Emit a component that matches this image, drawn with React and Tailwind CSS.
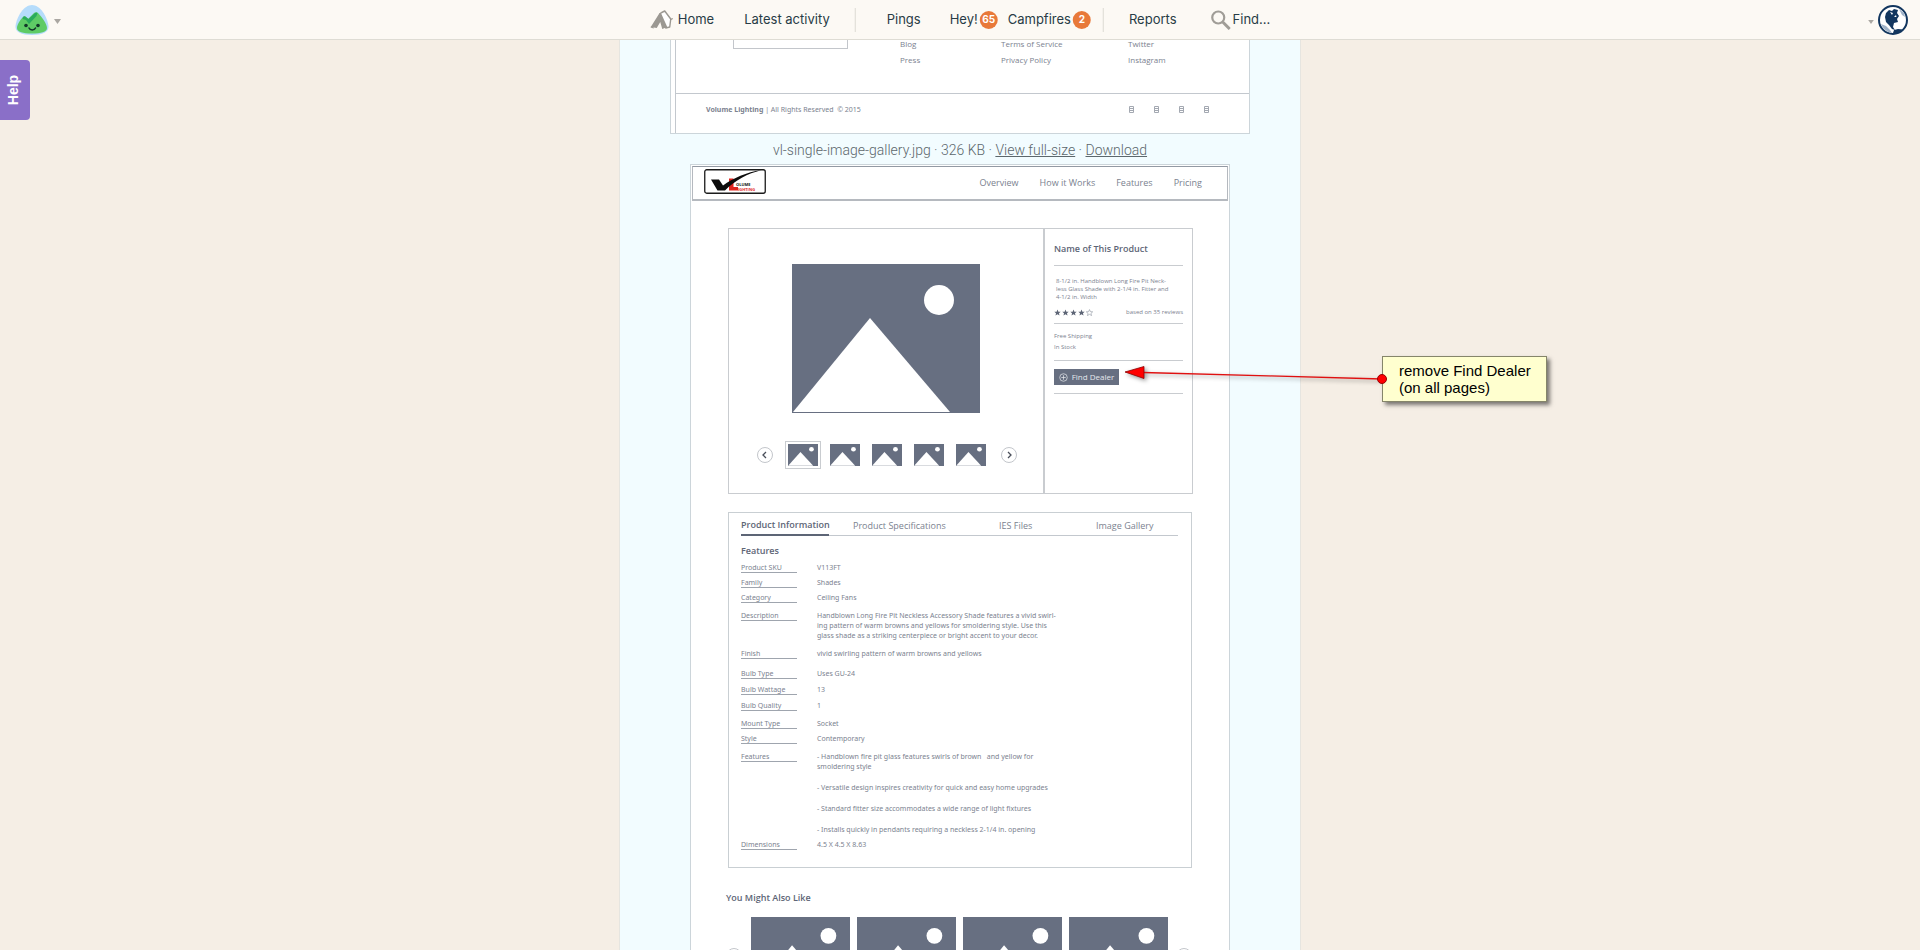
import React from "react";

const specs = [
  { label: "Product SKU", value: ["V113FT"], row: "h-[15px]" },
  { label: "Family", value: ["Shades"], row: "h-[15px]" },
  { label: "Category", value: ["Ceiling Fans"], row: "h-[18px]" },
  {
    label: "Description",
    value: [
      "Handblown Long Fire Pit Neckless Accessory Shade features a vivid swirl-\ning pattern of warm browns and yellows for smoldering style. Use this\nglass shade as a striking centerpiece or bright accent to your decor.",
    ],
    row: "h-[38px]",
  },
  { label: "Finish", value: ["vivid swirling pattern of warm browns and yellows"], row: "h-[20px]" },
  { label: "Bulb Type", value: ["Uses GU-24"], row: "h-[16px]" },
  { label: "Bulb Wattage", value: ["13"], row: "h-[16px]" },
  { label: "Bulb Quality", value: ["1"], row: "h-[18px]" },
  { label: "Mount Type", value: ["Socket"], row: "h-[15px]" },
  { label: "Style", value: ["Contemporary"], row: "h-[18px]" },
  {
    label: "Features",
    value: [
      "- Handblown fire pit glass features swirls of brown   and yellow for\nsmoldering style",
      "- Versatile design inspires creativity for quick and easy home upgrades",
      "- Standard fitter size accommodates a wide range of light fixtures",
      "- Installs quickly in pendants requiring a neckless 2-1/4 in. opening",
    ],
    row: "h-[88px]",
  },
  { label: "Dimensions", value: ["4.5 X 4.5 X 8.63"], row: "h-[15px]" },
];

const footerLinks = [
  ["Blog", "Press"],
  ["Terms of Service", "Privacy Policy"],
  ["Twitter", "Instagram"],
];

const Placeholder = ({ className }) => (
  <svg viewBox="0 0 188 149" preserveAspectRatio="none" className={className} aria-hidden="true">
    <rect width="188" height="149" fill="#676f81" />
    <circle cx="147" cy="36" r="15" fill="#fff" />
    <path d="M1 148L78 54l80 94z" fill="#fff" />
  </svg>
);

const Arrow = ({ label, flip }) => (
  <button
    type="button"
    aria-label={label}
    className="flex h-4 w-4 shrink-0 items-center justify-center rounded-full border border-[#c3c6cb] text-[#4a4f5a]"
  >
    <svg viewBox="0 0 8 8" className="h-2 w-2" fill="none" stroke="currentColor" strokeWidth="1.3" aria-hidden="true">
      <path d={flip ? "M3 1l3 3-3 3" : "M5 1L2 4l3 3"} />
    </svg>
  </button>
);

const Star = ({ filled }) => (
  <svg viewBox="0 0 24 24" className="h-[7px] w-[7px]" fill={filled ? "#5d6576" : "none"} stroke="#8a909c" strokeWidth={filled ? "0" : "2"} aria-hidden="true">
    <path d="M12 2l3 7 8 .7-6 5.200 2 7.600-7-4.200-7 4.200 2-7.600-6-5.200L9 9z" />
  </svg>
);

const Caret = ({ className }) => (
  <svg viewBox="0 0 7 5" className={className} aria-hidden="true">
    <path d="M0 0h7L3.500 5z" fill="#aaa7a2" />
  </svg>
);

const Badge = ({ children }) => (
  <span className="flex h-[18px] w-[18px] items-center justify-center rounded-full bg-[#e8793a] text-[10px] font-bold text-white">
    {children}
  </span>
);

const TopBar = () => (
  <header className="relative z-10 flex h-10 shrink-0 items-center justify-between border-b border-[#dedcd4] bg-[#fcf9f4] pl-3.5 pr-3">
    <button type="button" aria-label="Basecamp menu" className="flex items-center gap-1">
      <svg viewBox="0 0 36 32" className="h-8 w-9" aria-hidden="true">
        <path d="M18 1C10 1 3 12 1.500 22c-.6 6 6 9 16.500 9s17-3 16.500-9C33 12 26 1 18 1z" fill="#b5dcfb" />
        <path d="M3 24c0-3 3-8 6-11 1-1 2-1 3 0l2 2 6-6c1-1 3-1 4 0 4 4 9 11 9 15 0 4-6 5.500-15 5.500S3 28 3 24z" fill="#5ecb65" />
        <path d="M9 13c1-1 2-1 3 0l2.500 2L21 9c1-.8 2-.8 2.500 0l-1 3-7.500 8-3-4-3.500-1z" fill="#2bab5c" />
        <circle cx="12" cy="21.500" r="1.800" fill="#12372a" />
        <circle cx="24" cy="21.500" r="1.800" fill="#12372a" />
        <path d="M15 24c1 2.600 5.500 2.600 6.500 0" fill="none" stroke="#12372a" strokeWidth="1.500" strokeLinecap="round" />
      </svg>
      <Caret className="mt-1 h-[5px] w-[7px]" />
    </button>

    <nav className="absolute left-1/2 flex -translate-x-1/2 items-center whitespace-nowrap text-[13px] text-[#283c46]">
      <a href="#home" className="flex items-center gap-1">
        <svg viewBox="0 0 24 20" className="h-5 w-6" aria-hidden="true">
          <path d="M12 2.500l3-1.500 6 8-1 8-4 1-6-14z" fill="#fff" stroke="#9b9892" strokeWidth="1.400" strokeLinejoin="round" />
          <path d="M1 17L9.500 3.500 11 2.500 17.500 17l-5 2-2-7-3.500 6z" fill="#9b9892" />
          <path d="M21 9.500l2-1M1 17l3 1" stroke="#9b9892" strokeWidth="1.300" fill="none" />
        </svg>
        Home
      </a>
      <a href="#activity" className="ml-[30px]">Latest activity</a>
      <span className="ml-[25px] h-6 w-px bg-[#dddad3]" />
      <a href="#pings" className="ml-[31px]">Pings</a>
      <a href="#hey" className="ml-[29px] flex items-center gap-0.5">Hey!<Badge>65</Badge></a>
      <a href="#campfires" className="ml-2.5 flex items-center gap-0.5">Campfires<Badge>2</Badge></a>
      <span className="ml-3 h-6 w-px bg-[#dddad3]" />
      <a href="#reports" className="ml-[25px]">Reports</a>
      <a href="#find" className="ml-[34px] flex items-center gap-0.5">
        <svg viewBox="0 0 20 20" className="h-5 w-5" fill="none" stroke="#a09d97" strokeWidth="2.200" aria-hidden="true">
          <circle cx="7.500" cy="7.500" r="6" />
          <path d="M12 12l7 7" strokeWidth="3" />
        </svg>
        Find...
      </a>
    </nav>

    <button type="button" aria-label="Your account" className="flex items-center gap-1">
      <Caret className="mt-1 h-1 w-1.5" />
      <svg viewBox="0 0 30 30" className="h-[30px] w-[30px]" aria-hidden="true">
        <circle cx="15" cy="15" r="14" fill="#fff" stroke="#12365f" strokeWidth="2" />
        <path d="M8 8l3-3 3 1 2-2 4 1-1 3 2 3-2 3 1 3-4 1-1 4 2 3-3-1-3-4-3-3-1-5z" fill="#12365f" />
        <path d="M12 7l3 1-1 2zM16 12l2-2 .5 2z" fill="#fff" />
        <path d="M3 19c2 5 6 8 11 9l-2-3-4-4zM21 4l5 4 1 4-3-2z" fill="#9fb2c8" />
        <path d="M15 28l1-3 4-1 5 .5-4 3-3 1.500z" fill="#12365f" />
      </svg>
    </button>
  </header>
);

const FooterSheet = () => (
  <footer className="mx-[50px] border border-t-0 border-[#ccd5da] bg-white pl-1 text-[8px] leading-4 text-[#7b828f]">
    <div className="border-l border-[#c3c8ce]">
      <div className="flex h-[54px] items-start border-b border-[#c3c8ce] pl-[57px]">
        <div className="h-[9px] w-[115px] border border-t-0 border-[#c3c6cb]" />
        <div className="-mt-1 ml-[52px] grid grid-cols-[101px_127px_80px]">
          {footerLinks.map((column) => (
            <div key={column[0]} className="flex flex-col">
              {column.map((link) => (
                <a key={link} href="#footer">{link}</a>
              ))}
            </div>
          ))}
        </div>
      </div>
      <div className="flex h-[39px] items-center justify-between pb-2 pl-[30px] pr-10">
        <p className="whitespace-pre font-['Noto_Sans',sans-serif] text-[7px]"><b>Volume Lighting</b> | All Rights Reserved  © 2015</p>
        <div className="flex gap-5">
          {["f", "t", "g", "i"].map((name) => (
            <svg key={name} viewBox="0 0 5 7" className="h-[7px] w-[5px]" fill="none" stroke="#a3a8b1" aria-hidden="true">
              <path d="M.5.5h4v6h-4zM1 2.500h3M1 4.500h3" />
            </svg>
          ))}
        </div>
      </div>
    </div>
  </footer>
);

const SiteHeader = () => (
  <div className="m-px flex h-[35px] items-center justify-between border border-b-2 border-[#b5b9bf] border-t-[#9299a3] pl-[11px] pr-[25px]">
    <svg viewBox="0 0 62 25" className="mb-2 mt-1 h-[25px] w-[62px]" role="img" aria-label="Volume Lighting">
      <rect x=".75" y=".75" width="60.500" height="23.500" rx="2" fill="#fff" stroke="#1b1b1b" strokeWidth="1.300" />
      <path d="M25 9.500h4.500V18H34v3.500h-9z" fill="#e0251f" />
      <path d="M7 10.500h8l4 6C29 9 43 3 57 1.200 44 4.500 31 11 21 21.500h-7.500z" fill="#0c0c0c" />
      <text x="32" y="17" fontSize="4" fontWeight="bold" fill="#111">OLUME</text>
      <text x="34" y="21.500" fontSize="4" fontWeight="bold" fill="#e0251f">IGHTING</text>
    </svg>
    <nav className="flex gap-[21px] text-[9px] text-[#7b828f]">
      <a href="#overview">Overview</a>
      <a href="#how">How it Works</a>
      <a href="#features">Features</a>
      <a href="#pricing">Pricing</a>
    </nav>
  </div>
);

const ProductPanel = () => (
  <section className="ml-[37px] mr-[36px] mt-[27px] flex h-[266px] border border-[#c9ccd0]">
    <div className="flex flex-1 flex-col items-center pt-[35px]">
      <Placeholder className="h-[149px] w-[188px]" />
      <div className="mt-7 flex w-full items-center justify-between pl-7 pr-[26px]">
        <Arrow label="Previous image" />
        <div className="mr-1 flex items-center gap-[9px]">
          <span className="border border-[#c9ccd0] p-0.5"><Placeholder className="h-[22px] w-[30px]" /></span>
          <div className="flex gap-3">
            {[2, 3, 4, 5].map((n) => (
              <Placeholder key={n} className="h-[22px] w-[30px]" />
            ))}
          </div>
        </div>
        <Arrow label="Next image" flip />
      </div>
    </div>
    <aside className="w-[149px] border-l-2 border-[#c9ccd0] px-[9px] pt-3 text-[6px] leading-2 text-[#7b828f]">
      <h2 className="whitespace-nowrap border-b border-[#c9ccd0] pb-2 text-[9px] font-semibold leading-4 text-[#5d6576]">Name of This Product</h2>
      <p className="mt-[11px] whitespace-pre pl-0.5">{"8-1/2 in. Handblown Long Fire Pit Neck-\nless Glass Shade with 2-1/4 in. Fitter and\n4-1/2 in. Width"}</p>
      <div className="flex items-center justify-between border-b border-[#c9ccd0] py-[7px]">
        <span className="flex gap-px" role="img" aria-label="4 out of 5 stars">
          {[1, 2, 3, 4, 5].map((n) => (
            <Star key={n} filled={n < 5} />
          ))}
        </span>
        <span>based on 35 reviews</span>
      </div>
      <div className="border-b border-[#c9ccd0] pb-[9px] pt-2">
        <p>Free Shipping</p>
        <p className="mt-[3px]">In Stock</p>
      </div>
      <div className="border-b border-[#c9ccd0] py-2">
        <button type="button" className="flex h-4 w-[65px] items-center justify-center gap-1 whitespace-nowrap bg-[#676f81] text-[8px] text-[#e4e7ec]">
          <svg viewBox="0 0 10 10" className="h-[9px] w-[9px]" fill="none" stroke="currentColor" strokeWidth=".8" aria-hidden="true">
            <circle cx="5" cy="5" r="4.200" />
            <path d="M5 2.500v5M2.500 5h5" />
          </svg>
          Find Dealer
        </button>
      </div>
    </aside>
  </section>
);

const ProductDetails = () => (
  <section className="mx-[37px] mt-[18px] border border-[#c9cfd3] px-3 pb-3 pt-1 text-[#7b828f]">
    <div className="mr-px flex border-b border-[#c3c8ce] text-[9px] leading-[15px]" role="tablist">
      <button type="button" role="tab" aria-selected="true" className="-mb-px w-[88px] whitespace-nowrap border-b-2 border-[#5d6576] pb-0.5 text-left font-semibold text-[#5d6576]">Product Information</button>
      <button type="button" role="tab" className="ml-6 w-[146px] pb-0.5 text-left">Product Specifications</button>
      <button type="button" role="tab" className="w-[97px] pb-0.5 text-left">IES Files</button>
      <button type="button" role="tab" className="pb-0.5 text-left">Image Gallery</button>
    </div>
    <h3 className="mt-[7px] text-[9px] font-semibold leading-4 text-[#5d6576]">Features</h3>
    <table className="mt-1 text-left font-['Noto_Sans',sans-serif] text-[7px] leading-[10px]">
      <tbody>
        {specs.map((spec) => (
          <tr key={spec.label} className={spec.row}>
            <th scope="row" className="w-[76px] pr-5 align-top font-normal">
              <span className="block border-b border-[#9fa5ae] leading-[9px]">{spec.label}</span>
            </th>
            <td className="whitespace-pre align-top">
              <div className="flex flex-col gap-[11px]">
                {spec.value.map((text) => (
                  <p key={text}>{text}</p>
                ))}
              </div>
            </td>
          </tr>
        ))}
      </tbody>
    </table>
  </section>
);

const Related = () => (
  <section className="pl-[35px] pr-[37px] pt-[22px]">
    <h3 className="text-[9px] font-semibold leading-4 text-[#5d6576]">You Might Also Like</h3>
    <div className="mt-[11px] flex items-center justify-between">
      <Arrow label="Previous products" />
      <div className="flex gap-[7px]">
        {[1, 2, 3, 4].map((n) => (
          <Placeholder key={n} className="h-[78px] w-[99px]" />
        ))}
      </div>
      <Arrow label="Next products" flip />
    </div>
  </section>
);

const Note = () => (
  <div className="absolute left-1/2 top-[356px] z-20 ml-[165px] flex">
    <svg viewBox="0 0 262 46" className="-mr-[5px] h-[46px] w-[262px] drop-shadow-[2px_2px_2px_rgba(0,0,0,0.4)]" aria-hidden="true">
      <path d="M18 16.500L257 23" stroke="#e01010" strokeWidth="1.300" />
      <path d="M0 16l19-5.500v12z" fill="#f00" stroke="#8a0000" strokeWidth=".8" />
    </svg>
    <p className="w-[165px] border border-[#85856a] bg-[#ffffcf] py-[5px] pl-4 font-['Liberation_Sans',Arial,sans-serif] text-[15px] leading-[17px] text-black shadow-[3px_3px_4px_rgba(0,0,0,0.5)]">
      remove Find Dealer
      <br />
      (on all pages)
    </p>
    <span className="absolute left-[252px] top-[18px] h-2.5 w-2.5 rounded-full border border-[#900] bg-[#f00]" />
  </div>
);

const App = () => {
  return (
    <div className="relative flex h-screen flex-col overflow-hidden bg-[#f5eee5] font-['Inter',sans-serif]">
      <TopBar />
      <button type="button" className="absolute left-0 top-[60px] z-10 flex h-[60px] w-[30px] items-center justify-center rounded-r bg-[#8a6fc8] pr-1 font-['Liberation_Sans',Arial,sans-serif] text-sm font-bold text-white">
        <span className="-rotate-90">Help</span>
      </button>
      <main className="mx-auto w-full max-w-[682px] flex-1 border-x border-[#e6e5e0] bg-[#f2fcff] font-['Open_Sans',sans-serif]">
        <FooterSheet />
        <p className="pb-1 pt-[7px] text-center font-['Roboto',sans-serif] text-[14px] font-light leading-[19px] text-[#5c676c]">
          vl-single-image-gallery.jpg · 326 KB · <a href="#full" className="underline">View full-size</a> ·{" "}
          <a href="#download" className="underline">Download</a>
        </p>
        <article className="mx-[70px] border border-[#ccd5da] bg-white">
          <SiteHeader />
          <ProductPanel />
          <ProductDetails />
          <Related />
        </article>
      </main>
      <Note />
    </div>
  );
};

export default App;
